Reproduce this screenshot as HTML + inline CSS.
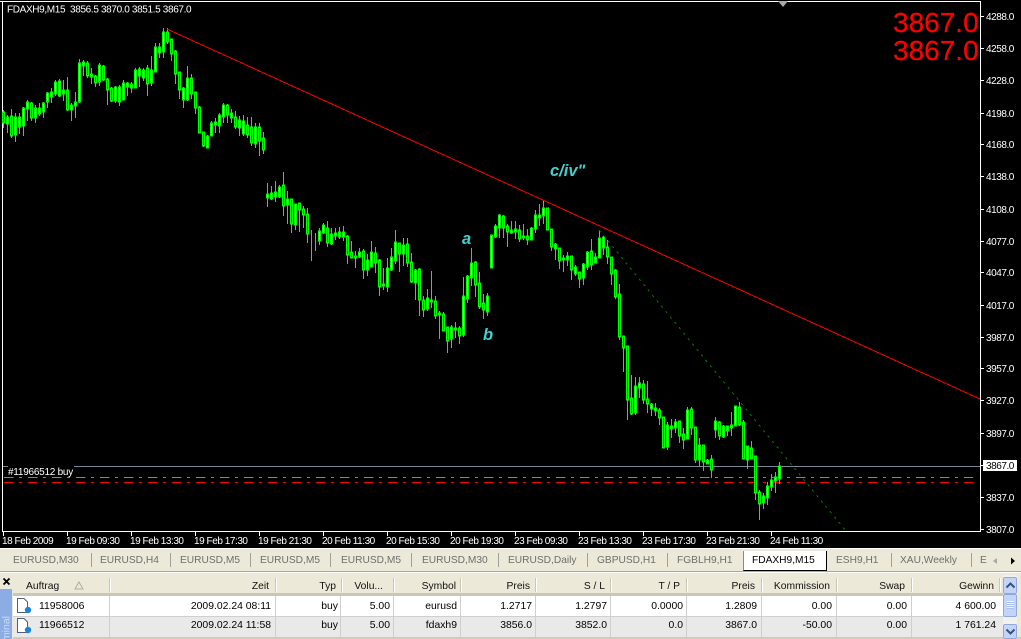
<!DOCTYPE html>
<html>
<head>
<meta charset="utf-8">
<style>
html,body{margin:0;padding:0;background:#000}
body{width:1021px;height:639px;position:relative;overflow:hidden;font-family:"Liberation Sans",sans-serif}
#c{position:absolute;left:0;top:0}
#c text{font-family:"Liberation Sans",sans-serif}
.ax{fill:#fff;font-size:10px;letter-spacing:-.45px}
.red{fill:#f00;font-size:28px;stroke:#f00;stroke-width:.2px}
.cy{fill:#45d0d0;font-style:italic;font-weight:bold;font-size:16.500px}
#b{position:absolute;left:0;top:548px;width:1021px;height:91px;background:#ece9d8;overflow:hidden}
#b div,#b span{position:absolute}
.t{top:6px;font-size:10.200px;color:#6e6e6e;line-height:14px;white-space:nowrap}
.s{top:5px;width:1px;height:14px;background:#a0a0a0}
.h{top:32px;font-size:10.300px;color:#111;line-height:14px;white-space:nowrap}
.r1,.r2{font-size:10.400px;color:#000;line-height:14px;white-space:nowrap}
.r1{top:52px}.r2{top:71px}
.v{width:1px;top:48px;height:41px;background:#cfcfcf}
.hs{width:1px;top:30px;height:14px;background:#cbc7b6;box-shadow:1px 0 0 #fff}
</style>
</head>
<body>
<svg id="c" width="1021" height="548" viewBox="0 0 1021 548" xmlns="http://www.w3.org/2000/svg">
<rect width="1021" height="548" fill="#000"/>
<g shape-rendering="crispEdges">
<path d="M2.500 1V531.500H980.500V1M0 1.500H981" fill="none" stroke="#fff"/>
<path d="M3.500 532V536M67.500 532V536M131.500 532V536M195.500 532V536M259.500 532V536M323.500 532V536M387.500 532V536M451.500 532V536M515.500 532V536M579.500 532V536M643.500 532V536M707.500 532V536M771.500 532V536M981 16.500H984M981 48.500H984M981 80.500H984M981 113.500H984M981 144.500H984M981 176.500H984M981 209.500H984M981 241.500H984M981 272.500H984M981 305.500H984M981 337.500H984M981 368.500H984M981 400.500H984M981 433.500H984M981 465.500H984M981 497.500H984M981 529.500H984" fill="none" stroke="#fff"/>
<path d="M3 466.500H980" stroke="#778899" fill="none"/>
<rect x="8" y="463" width="66" height="13" fill="#000"/>
<path d="M4 477.500H973" stroke="#3cb83c" stroke-dasharray="9.400 5.600 3 6" fill="none"/>
<path d="M4 482.500H973" stroke="#f00" stroke-dasharray="9.400 5.600 3 6" fill="none"/>
</g>
<polygon points="778,1 788,1 783,7" fill="#a8a8a8"/>
<g transform="translate(.5,0)" shape-rendering="crispEdges" fill="none">
<path stroke="#00ff00" d="M3 110V128M7 115V133M11 109V138M15 113V142M19 113V134M23 107V136M27 100V121M31 102V121M35 105V123M39 103V116M43 102V118M47 92V108M51 88V103M55 80V96M59 79V97M63 80V101M67 77V111M71 103V121M75 92V118M79 59V103M83 60V76M87 61V78M91 68V84M95 75V87M99 63V86M103 65V81M107 78V105M111 87V102M115 86V103M119 85V106M123 80V100M127 82V96M131 82V93M135 68V88M139 67V87M143 68V81M147 65V96M151 56V86M155 43V72M159 43V58M163 28V58M167 28V44M171 39V61M175 50V84M179 72V99M183 87V108M187 66V101M191 74V99M195 92V114M199 106V133M203 132V147M207 135V148M211 121V136M215 118V133M219 113V133M223 103V123M227 104V123M231 109V123M235 111V129M239 116V136M243 115V136M247 117V138M251 117V146M255 123V148M259 123V156M263 132V154M267 183V207M271 186V200M275 181V202M279 185V198M283 172V216M287 191V224M291 199V233M295 204V230M299 203V232M303 206V228M307 208V243M311 230V261M315 233V251M319 228V245M323 223V234M327 221V247M331 228V245M335 228V240M339 227V239M343 226V241M347 235V264M351 241V258M355 251V268M359 248V258M363 249V279M367 254V276M371 241V267M375 247V273M379 259V296M383 268V290M387 258V292M391 248V271M395 230V264M399 243V272M403 238V266M407 238V267M411 253V283M415 269V300M419 268V316M423 296V317M427 289V311M431 271V308M435 296V319M439 311V339M443 312V331M447 327V353M451 325V348M455 322V338M459 326V344M463 277V337M467 275V303M471 248V286M475 261V297M479 272V309M483 294V319M487 293V316M491 235V268M495 224V238M499 214V238M503 215V238M507 224V247M511 221V234M515 221V239M519 225V242M523 224V240M527 229V245M531 227V240M535 210V233M539 204V226M543 201V224M547 208V230M551 229V251M555 243V260M559 248V269M563 255V272M567 252V266M571 256V280M575 265V276M579 272V288M583 263V285M587 251V270M591 239V270M595 253V263M599 231V258M603 236V255M607 240V264M611 257V285M615 269V299M619 284V340M623 336V372M627 346V420M631 375V415M635 377V415M639 377V398M643 380V404M647 381V413M651 403V416M655 403V416M659 408V425M663 417V448M667 422V450M671 419V438M675 419V433M679 421V443M683 428V449M687 407V439M691 407V435M695 427V463M699 438V466M703 445V471M707 459V464M711 455V478M715 417V438M719 421V440M723 425V438M727 426V436M731 412V436M735 406V426M739 402V426M743 420V459M747 446V469M751 441V459M755 456V500M759 490V520M763 493V509M767 482V505M771 474V491M775 472V493M779 462V484"/>
<defs>
<path id="u" d="M7 118V123M15 118V134M19 118V126M23 109V125M27 103V108M35 109V117M39 109V113M43 104V111M47 94V101M51 93V96M55 83V93M59 82V95M63 91V93M71 106V109M75 103V105M79 64V101M83 63V65M91 75V76M99 66V81M115 88V100M119 88V101M123 84V99M127 84V86M131 85V87M135 71V87M139 70V75M143 71V77M151 71V82M155 48V71M159 48V52M163 33V51M183 89V99M187 79V99M207 137V147M211 124V135M215 123V124M219 116V125M223 106V116M231 114V117M239 121V127M243 122V133M255 128V143M267 195V197M271 194V198M275 193V196M279 188V196M287 200V204M295 205V224M319 232V240M323 226V232M331 235V243M335 234V235M339 233V236M343 233V236M355 257V257M359 253V256M367 261V269M371 253V266M383 285V285M387 269V286M391 258V269M395 243V260M403 246V253M415 271V282M427 299V308M431 301V301M439 314V314M451 328V338M455 329V329M463 297V334M467 277V298M471 264V277M487 297V311M491 236V267M495 227V236M499 216V227M511 231V232M515 230V231M523 237V237M531 229V239M535 216V228M539 216V217M543 209V215M555 245V248M563 259V259M567 257V259M575 268V273M583 265V277M587 253V266M595 258V262M599 239V257M603 238V247M635 387V412M639 384V387M651 405V408M655 409V410M667 426V446M671 427V428M675 423V427M687 411V438M699 446V459M707 461V463M715 422V429M723 427V436M727 427V430M731 426V427M735 407V425M747 447V459M763 497V502M767 487V497M771 481V486M775 478V480M779 467V478"/>
<path id="d" d="M3 113V122M11 117V135M31 104V117M67 91V109M87 64V75M95 77V82M103 67V79M107 80V89M111 89V100M147 69V83M167 33V41M171 40V53M175 52V73M179 73V89M191 79V93M195 93V107M199 108V132M203 133V145M227 106V114M235 118V126M247 126V134M251 128V142M259 128V140M263 139V149M283 186V205M291 200V223M299 204V209M303 210V214M307 215V233M327 229V242M347 237V254M351 253V257M363 252V269M375 254V262M379 261V286M399 244V253M407 245V262M411 263V281M419 270V299M423 301V309M435 302V315M443 315V330M447 328V340M459 329V335M475 263V284M479 284V306M483 304V309M503 217V227M507 227V231M519 231V238M527 237V239M547 209V229M551 230V246M559 249V260M571 257V269M579 273V278M591 252V264M607 248V256M611 258V273M615 271V296M619 295V336M623 337V347M627 347V399M631 399V413M643 385V399M647 400V403M659 411V417M663 418V447M679 422V435M683 435V439M691 410V427M695 428V459M703 446V461M711 460V469M719 423V435M739 408V424M743 423V458M751 449V458M755 457V492M759 493V503"/>
</defs>
<g stroke="#00ff00" stroke-width="3" stroke-linecap="square"><use href="#u"/><use href="#d"/></g>
<use href="#u" stroke="#fff"/>
<use href="#d" stroke="#f00"/>
</g>
<g fill="none" shape-rendering="crispEdges">
<path d="M167 29L980 399" stroke="#f00"/>
<path d="M599 230L846 531" stroke="#007a00" stroke-dasharray="2.500 4.500"/>
</g>
<text x="7" y="12.500" class="ax" style="letter-spacing:-.35px" xml:space="preserve">FDAXH9,M15  3856.5 3870.0 3851.5 3867.0</text>
<text x="8" y="475" class="ax" style="letter-spacing:-.25px">#11966512 buy</text>
<g class="ax">
<text class="ax" x="986" y="20">4288.0</text><text class="ax" x="986" y="52">4258.0</text><text class="ax" x="986" y="84">4228.0</text><text class="ax" x="986" y="117">4198.0</text><text class="ax" x="986" y="148">4168.0</text><text class="ax" x="986" y="180">4138.0</text><text class="ax" x="986" y="213">4108.0</text><text class="ax" x="986" y="245">4077.0</text><text class="ax" x="986" y="276">4047.0</text><text class="ax" x="986" y="309">4017.0</text><text class="ax" x="986" y="341">3987.0</text><text class="ax" x="986" y="372">3957.0</text><text class="ax" x="986" y="404">3927.0</text><text class="ax" x="986" y="437">3897.0</text><text class="ax" x="986" y="501">3837.0</text><text class="ax" x="986" y="533">3807.0</text>
</g>
<rect x="983" y="460" width="34" height="11" fill="#fff"/>
<text x="986" y="469" class="ax" style="fill:#000">3867.0</text>
<text class="ax" x="2" y="544">18 Feb 2009</text><text class="ax" x="66" y="544">19 Feb 09:30</text><text class="ax" x="130" y="544">19 Feb 13:30</text><text class="ax" x="194" y="544">19 Feb 17:30</text><text class="ax" x="258" y="544">19 Feb 21:30</text><text class="ax" x="322" y="544">20 Feb 11:30</text><text class="ax" x="386" y="544">20 Feb 15:30</text><text class="ax" x="450" y="544">20 Feb 19:30</text><text class="ax" x="514" y="544">23 Feb 09:30</text><text class="ax" x="578" y="544">23 Feb 13:30</text><text class="ax" x="642" y="544">23 Feb 17:30</text><text class="ax" x="706" y="544">23 Feb 21:30</text><text class="ax" x="770" y="544">24 Feb 11:30</text>
<text class="red" x="893" y="32">3867.0</text>
<text class="red" x="893" y="60">3867.0</text>
<text class="cy" x="462" y="244">a</text>
<text class="cy" x="483" y="340">b</text>
<text class="cy" x="550" y="176">c/iv"</text>
</svg>

<div id="b">
<div style="left:0;top:0;width:1021px;height:1px;background:#fff"></div>
<div style="left:0;top:23px;width:1021px;height:1px;background:#aca899"></div>
<div style="left:0;top:24px;width:1021px;height:1px;background:#fff"></div>

<span class="t" style="left:13px">EURUSD,M30</span><div class="s" style="left:91px"></div>
<span class="t" style="left:100px">EURUSD,H4</span><div class="s" style="left:170px"></div>
<span class="t" style="left:180px">EURUSD,M5</span><div class="s" style="left:250px"></div>
<span class="t" style="left:260px">EURUSD,M5</span><div class="s" style="left:330px"></div>
<span class="t" style="left:341px">EURUSD,M5</span><div class="s" style="left:411px"></div>
<span class="t" style="left:422px">EURUSD,M30</span><div class="s" style="left:498px"></div>
<span class="t" style="left:508px">EURUSD,Daily</span><div class="s" style="left:587px"></div>
<span class="t" style="left:597px">GBPUSD,H1</span><div class="s" style="left:667px"></div>
<span class="t" style="left:677px">FGBLH9,H1</span>
<div style="left:743px;top:3px;width:82px;height:19px;background:#fff;border-right:1px solid #000;border-bottom:1px solid #000;border-left:1px solid #888"></div>
<span class="t" style="left:752px;color:#000">FDAXH9,M15</span>
<span class="t" style="left:836px">ESH9,H1</span><div class="s" style="left:891px"></div>
<span class="t" style="left:900px">XAU,Weekly</span><div class="s" style="left:971px"></div>
<span class="t" style="left:980px">E</span>
<svg style="position:absolute;left:992px;top:8px" width="24" height="10"><path d="M5 2V8L1 5Z" fill="#a8a8a8"/><path d="M19 1.500V8.500L23 5Z" fill="#000"/></svg>

<svg style="position:absolute;left:2px;top:29px" width="9" height="9"><path d="M1.500 1.500L7.500 7.500M7.500 1.500L1.500 7.500" stroke="#000" stroke-width="1.800"/></svg>
<svg style="position:absolute;left:0;top:41px" width="12" height="50"><rect width="12" height="50" fill="#8cace6"/><text transform="translate(9.500,27) rotate(-90)" text-anchor="end" font-family="Liberation Sans, sans-serif" font-size="10.500" fill="#cfdcf5">Terminal</text></svg>

<div style="left:13px;top:27px;width:990px;height:19px;background:#ece9d8"></div>
<div style="left:13px;top:45px;width:990px;height:3px;background:#cbc7b6"></div>
<div style="left:13px;top:48px;width:990px;height:20px;background:#fff"></div>
<div style="left:13px;top:68px;width:990px;height:1px;background:#cfcfcf"></div>
<div style="left:13px;top:69px;width:990px;height:20px;background:#e9e9e9"></div>
<div style="left:13px;top:89px;width:1008px;height:2px;background:#d0ccbc"></div>

<div class="v" style="left:109px"></div><div class="v" style="left:275px"></div><div class="v" style="left:340px"></div><div class="v" style="left:393px"></div><div class="v" style="left:460px"></div><div class="v" style="left:535px"></div><div class="v" style="left:610px"></div><div class="v" style="left:686px"></div><div class="v" style="left:761px"></div><div class="v" style="left:836px"></div><div class="v" style="left:911px"></div>
<div class="hs" style="left:109px"></div><div class="hs" style="left:275px"></div><div class="hs" style="left:341px"></div><div class="hs" style="left:393px"></div><div class="hs" style="left:460px"></div><div class="hs" style="left:535px"></div><div class="hs" style="left:610px"></div><div class="hs" style="left:686px"></div><div class="hs" style="left:761px"></div><div class="hs" style="left:836px"></div><div class="hs" style="left:911px"></div><div class="hs" style="left:999px"></div>

<span class="h" style="left:26px">Auftrag</span>
<svg style="position:absolute;left:74px;top:33px" width="10" height="9"><path d="M1 8H9L5 1Z" fill="none" stroke="#b0ad9e"/></svg>
<span class="h" style="right:752px">Zeit</span>
<span class="h" style="right:685px">Typ</span>
<span class="h" style="right:638px">Volu...</span>
<span class="h" style="right:565px">Symbol</span>
<span class="h" style="right:491px">Preis</span>
<span class="h" style="right:416px">S / L</span>
<span class="h" style="right:341px">T / P</span>
<span class="h" style="right:266px">Preis</span>
<span class="h" style="right:191px">Kommission</span>
<span class="h" style="right:116px">Swap</span>
<span class="h" style="right:27px">Gewinn</span>

<svg style="position:absolute;left:16px;top:49px" width="16" height="17"><path d="M1.500 1.500H8L11.500 5V15.500H1.500Z" fill="#fff" stroke="#55606e"/><circle cx="12" cy="13" r="3.200" fill="#1c84d8"/></svg>
<svg style="position:absolute;left:16px;top:69px" width="16" height="17"><path d="M1.500 1.500H8L11.500 5V15.500H1.500Z" fill="#fff" stroke="#55606e"/><circle cx="12" cy="13" r="3.200" fill="#1c84d8"/></svg>

<span class="r1" style="left:39px">11958006</span>
<span class="r1" style="right:750px">2009.02.24 08:11</span>
<span class="r1" style="right:683px">buy</span>
<span class="r1" style="right:631px">5.00</span>
<span class="r1" style="right:564px">eurusd</span>
<span class="r1" style="right:489px">1.2717</span>
<span class="r1" style="right:414px">1.2797</span>
<span class="r1" style="right:338px">0.0000</span>
<span class="r1" style="right:264px">1.2809</span>
<span class="r1" style="right:189px">0.00</span>
<span class="r1" style="right:114px">0.00</span>
<span class="r1" style="right:25px">4 600.00</span>

<span class="r2" style="left:39px">11966512</span>
<span class="r2" style="right:750px">2009.02.24 11:58</span>
<span class="r2" style="right:683px">buy</span>
<span class="r2" style="right:631px">5.00</span>
<span class="r2" style="right:564px">fdaxh9</span>
<span class="r2" style="right:489px">3856.0</span>
<span class="r2" style="right:414px">3852.0</span>
<span class="r2" style="right:338px">0.0</span>
<span class="r2" style="right:264px">3867.0</span>
<span class="r2" style="right:189px">-50.00</span>
<span class="r2" style="right:114px">0.00</span>
<span class="r2" style="right:25px">1 761.24</span>

<div style="left:1003px;top:27px;width:14px;height:64px;background:#f3f1ec"></div>
<div style="left:1003px;top:29px;width:12px;height:15px;background:#c3d4f8;border:1px solid #8fa8dc;border-radius:2px"></div>
<svg style="position:absolute;left:1005px;top:33px" width="11" height="9"><path d="M1.500 6.500L5.500 2.500L9.500 6.500" fill="none" stroke="#35527f" stroke-width="2"/></svg>
<div style="left:1003px;top:46px;width:12px;height:21px;background:#c3d4f8;border:1px solid #8fa8dc;border-radius:2px"></div>
<div style="left:1007px;top:53px;width:7px;height:8px;background:repeating-linear-gradient(#eef2fc 0 1px,#a8c0ee 1px 2px)"></div>
<div style="left:1003px;top:76px;width:12px;height:13px;background:#c3d4f8;border:1px solid #8fa8dc;border-radius:2px"></div>
<svg style="position:absolute;left:1005px;top:79px" width="11" height="9"><path d="M1.500 2.500L5.500 6.500L9.500 2.500" fill="none" stroke="#35527f" stroke-width="2"/></svg>
</div>
</body>
</html>
